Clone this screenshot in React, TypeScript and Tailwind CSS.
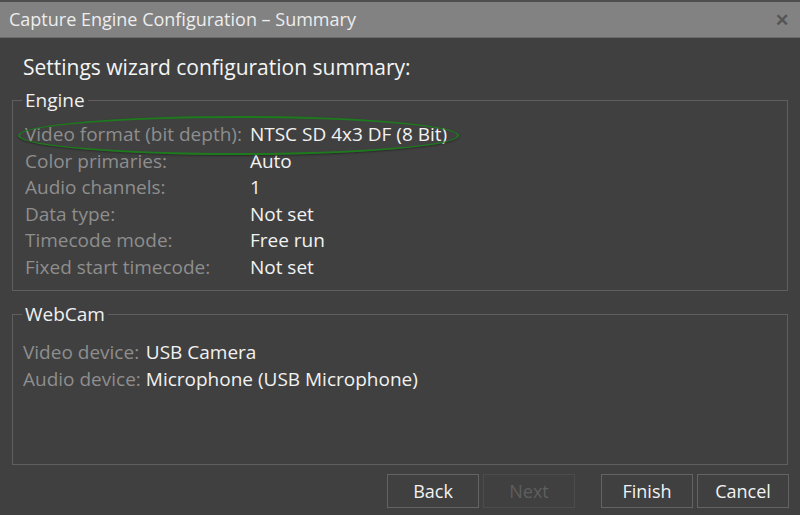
import React from "react";

const engineRows: [string, string][] = [
  ["Video format (bit depth):", "NTSC SD 4x3 DF (8 Bit)"],
  ["Color primaries:", "Auto"],
  ["Audio channels:", "1"],
  ["Data type:", "Not set"],
  ["Timecode mode:", "Free run"],
  ["Fixed start timecode:", "Not set"],
];

const webcamRows: [string, string][] = [
  ["Video device:", "USB Camera"],
  ["Audio device:", "Microphone (USB Microphone)"],
];

function Button({ label, disabled }: { label: string; disabled?: boolean }) {
  return (
    <button
      className={
        disabled
          ? "h-[34px] w-[92px] border border-[#4c4c4c] text-[18px] text-[#5e5e5e]"
          : "h-[34px] w-[92px] border border-[#636363] text-[18px] text-[#f2f2f2]"
      }
    >
      {label}
    </button>
  );
}

export default function App() {
  return (
    <div
      className="flex h-[515px] w-[800px] flex-col overflow-hidden bg-[#404040]"
      style={{ fontFamily: '"Open Sans", "Noto Sans", sans-serif' }}
    >
      {/* title bar */}
      <div className="h-[2px] bg-[#4e4e4e]" />
      <div className="flex h-[36px] items-center justify-between border-b border-[#6a6a6a] bg-[#828282] pl-[9px] pr-[11px]">
        <span className="text-[18px] text-[#ededed]">Capture Engine Configuration – Summary</span>
        <span className="text-[17px] font-bold text-[#555555]">✕</span>
      </div>

      <div className="flex flex-1 flex-col px-[12px]">
        <h1 className="mt-[15px] pl-[11px] text-[21px] leading-[28px] text-[#f4f4f4]">
          Settings wizard configuration summary:
        </h1>

        <fieldset className="mt-[7px] border border-[#5f5f5f] px-[9px] pb-[10px]">
          <legend className="px-[3px] text-[19px] leading-[24px] text-[#f0f0f0]">Engine</legend>
          <div className="relative mt-[9px]">
            <div className="grid grid-cols-[auto_1fr] gap-x-[8px] pl-[3px] text-[19px] leading-[26.5px]">
              {engineRows.map(([k, v]) => (
                <React.Fragment key={k}>
                  <span className="text-[#8e8e8e]">{k}</span>
                  <span className="text-[#f2f2f2]">{v}</span>
                </React.Fragment>
              ))}
            </div>
            {/* highlight around the first row */}
            <div className="absolute left-[-4px] top-[-5px] h-[39px] w-[441px] rounded-[50%] border-2 border-[#1d7a1d] shadow-[0_1px_2px_rgba(0,0,0,0.35)]" />
          </div>
        </fieldset>

        <fieldset className="mt-[11px] h-[163px] border border-[#5f5f5f] px-[9px]">
          <legend className="px-[3px] text-[19px] leading-[24px] text-[#f0f0f0]">WebCam</legend>
          <div className="mt-[13px] grid grid-cols-[auto_1fr] gap-x-[5px] pl-[1px] text-[19px] leading-[27px]">
            {webcamRows.map(([k, v]) => (
              <React.Fragment key={k}>
                <span className="text-[#8e8e8e]">{k}</span>
                <span className="text-[#f2f2f2]">{v}</span>
              </React.Fragment>
            ))}
          </div>
        </fieldset>

        <div className="mt-[9px] flex justify-end">
          <div className="flex gap-[4px]">
            <Button label="Back" />
            <Button label="Next" disabled />
          </div>
          <div className="ml-[26px] mr-[-1px] flex gap-[4px]">
            <Button label="Finish" />
            <Button label="Cancel" />
          </div>
        </div>
      </div>
    </div>
  );
}
